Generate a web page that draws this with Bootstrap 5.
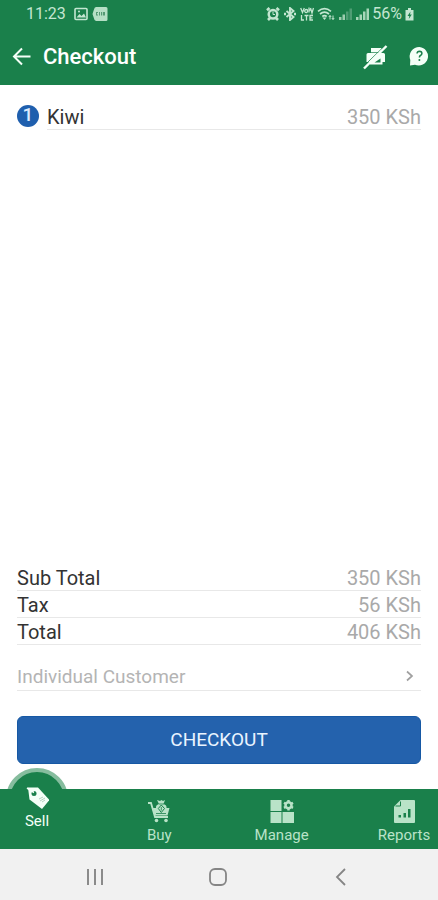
<!DOCTYPE html>
<html lang="en">
<head>
<meta charset="utf-8">
<meta name="viewport" content="width=device-width, initial-scale=1">
<title>Checkout</title>
<link href="https://cdn.jsdelivr.net/npm/bootstrap@5.3.0/dist/css/bootstrap.min.css" rel="stylesheet">
<style>
  :root { --brand: #1a804b; --mint: #b9e3c8; --line: #e8e8e8; --soft: #a9a9a9; }
  body { font-family: Roboto, "Liberation Sans", sans-serif; font-size: 20px; line-height: 26px; color: #333; background: #fff; }
  svg { display: block; flex: none; }
  .brand-bg { background: var(--brand); }
  .status-line { height: 28px; padding: 0 24px 0 26px; font-size: 16px; line-height: 28px; color: #c4e6d1; }
  .status-icons { gap: 3px; }
  .app-bar { height: 57px; padding: 0 8px 0 11px; }
  .app-title { font-size: 22px; line-height: 28px; font-weight: 500; margin-left: 10px; }
  .sheet { padding: 19px 17px 25px 17px; }
  .rule { border-bottom: 1px solid var(--line); }
  .item-number { width: 22px; height: 22px; border-radius: 50%; background: #1f5fae; color: #dcebff; font-size: 19px; line-height: 20px; font-weight: 500; margin-top: 1px; }
  .item-line { height: 26px; }
  .amount { color: var(--soft); }
  .sum-line { height: 27px; line-height: 28px; }
  .sum-line > * { font-weight: 400; }
  .customer { height: 28px; margin-top: 18px; color: #b4b4b4; font-size: 19px; line-height: 28px; }
  .pay { height: 48px; margin-top: 25px; border-radius: 6px; background: #2462ad; border: 1px solid #1658a4; color: #eaf4ff; font-size: 19px; line-height: 28px; }
  .pay:hover { background: #1d569b; color: #fff; }
  .tabs { height: 60px; padding-left: 3px; }
  .tab-link { width: 68px; padding-top: 10px; color: var(--mint); font-size: 15px; line-height: 20px; text-decoration: none; position: relative; }
  .tab-link svg { margin-bottom: 2px; }
  .tab-current { padding-top: 0; margin-top: -4px; color: #f4fff7; }
  .tab-current > * { position: relative; }
  .tab-current::before { content: ""; position: absolute; left: 3px; top: -17px; width: 62px; height: 62px; border-radius: 50%; background: var(--brand); border: 4px solid #86bd9e; clip-path: inset(0 0 41px 0); }
  .system-bar { height: 51px; padding: 4px 85px 0 83px; background: #f1f1f1; }
  .system-bar .btn { line-height: 0; }
</style>
<script src="https://cdn.jsdelivr.net/npm/bootstrap@5.3.0/dist/js/bootstrap.bundle.min.js"></script>
</head>
<body class="d-flex flex-column min-vh-100">
<header class="brand-bg">
  <div class="status-line d-flex align-items-center justify-content-between">
    <div class="d-flex align-items-center">
      <span>11:23</span>
      <svg class="ms-2" width="14" height="14" viewBox="0 0 14 14"><rect x="1" y="1.500" width="12" height="11" rx="1" fill="none" stroke="#c4e6d1" stroke-width="1.600"/><path d="M2.500 10.500 5.500 7l2 2L10 6.500l2 4z" fill="#c4e6d1"/><circle cx="5" cy="4.500" r="1" fill="#c4e6d1"/></svg>
      <svg class="ms-1" width="16" height="14" viewBox="0 0 16 14"><path d="M4 0h10q1.500 0 1.500 1.500v11q0 1.500-1.500 1.500H4Q2 13 1.500 10L.5 7l1.300-4Q2.500 0 4 0" fill="#b5dfc5"/><path d="M4 5h2v1H5v1.500h1v1H4zm3 0h1v3.500H7zm2 0h1.200v3.500H9zm2 0h2v3.500h-2z" fill="#559a74"/></svg>
    </div>
    <div class="status-icons d-flex align-items-center">
      <svg width="14" height="14" viewBox="0 0 14 14" fill="none" stroke="#c4e6d1"><circle cx="7" cy="7.300" r="4.300" stroke-width="2.500"/><path d="M1 3.200 3.500 1M13 3.200 10.500 1M2 13l2-2M12 13l-2-2" stroke-width="2.600"/><path d="M7 4.500v3h2"/></svg>
      <svg width="14" height="14" viewBox="0 0 13 14" fill="none" stroke="#c4e6d1" stroke-width="1.900"><path d="m3 4 7 6-3.500 3V1L10 4l-7 6"/><path d="M.5 7h2M10.500 7h2" stroke-width="2.600"/></svg>
      <svg width="14" height="14" viewBox="0 0 14 14" fill="none" stroke="#c4e6d1" stroke-width="1.300"><path d="m.7 1 1.800 4.500L4.300 1"/><circle cx="6.200" cy="4" r="1.500"/><path d="M9 .5v5M9 3h1.500M13.500 1l-1.500 5-1.500-5M1.500 8v5H4M4.500 8.500h4M6.500 8.500v5M13 8.500H10v4.500h3M10 10.800h2.500"/></svg>
      <svg width="18" height="14" viewBox="0 0 18 14" fill="none" stroke="#c4e6d1"><path d="M1 4.300Q7.500-1 14 4.300M3 7q4.500-3.800 9 0M5.300 9.500q2.200-1.800 4.400 0" stroke-width="1.700"/><path d="m7.500 13-2-2.500h4z" fill="#c4e6d1" stroke="none"/><path d="M13 8.500v4M16 12.500v-4M11.800 10 13 8.500 14.200 10M14.800 11l1.200 1.500 1.200-1.500"/></svg>
      <svg width="14" height="14" viewBox="0 0 14 14"><path d="M1 10h2.500v3H1zM4.500 7.500H7V13H4.500z" fill="#9dcdb0"/><path d="M8 4.500h2.500V13H8zM11.500 1.500H14V13h-2.500z" fill="#4f9d74"/></svg>
      <svg width="14" height="14" viewBox="0 0 14 14"><path d="M1 10h2.500v3H1zM4.500 7.500H7V13H4.500zM8 4.500h2.500V13H8zM11.500 1.500H14V13h-2.500z" fill="#a7d6b9"/></svg>
      <span>56%</span>
      <svg width="9" height="14" viewBox="0 0 9 14"><path d="M3 1h3v2h2.500v10.500h-8V3H3z" fill="#c4e6d1"/><path d="M5.500 4.500 2.500 9h1.800l-.5 3L6.800 7.500H5z" fill="#1a804b"/></svg>
    </div>
  </div>
  <div class="app-bar d-flex align-items-center">
    <button class="btn p-0 border-0" type="button" aria-label="Back">
      <svg width="22" height="22" viewBox="0 0 22 22" fill="none" stroke="#f4fff7" stroke-width="2"><path d="M19.500 10.500H3M11 2.500l-8 8 8 8"/></svg>
    </button>
    <h1 class="app-title text-white mb-0 me-auto">Checkout</h1>
    <button class="btn p-0 border-0 me-3" type="button" aria-label="Printer off">
      <svg width="26" height="26" viewBox="0 0 26 26"><path d="M9 4h10.500v4H9zM6 9h15.500q1.500 0 1.500 1.500V18h-2.500v2.500H8V18H4.500v-7.500Q4.500 9 6 9z" fill="#f4fff7"/><path d="m12.500 18.500 6-4v4z" fill="#1a804b"/><path d="M9 8.500h10" stroke="#5aa57d"/><path d="M22.500 2 .8 23" stroke="#1a804b" stroke-width=".8"/><path d="M24.500 2 2 24.500" stroke="#f4fff7" stroke-width="2.400"/></svg>
    </button>
    <button class="btn p-0 border-0 ms-1" type="button" aria-label="Help">
      <svg width="22" height="22" viewBox="0 0 22 22"><path d="M11.500 1a9.300 9.300 0 1 1-4.500 17.800L2 19.500 2.300 14A9.500 9.500 0 0 1 11.500 1" fill="#f4fff7"/><path d="M9 7.500q.2-2.300 2.500-2.300 2.400.1 2.400 2.200 0 1.300-1.500 2.100-1 .6-1 2" fill="none" stroke="#1a804b" stroke-width="1.500"/><circle cx="11.400" cy="14" r="1" fill="#1a804b"/></svg>
    </button>
  </div>
</header>

<main class="sheet flex-grow-1 d-flex flex-column">
  <div class="d-flex align-items-start">
    <span class="item-number text-center flex-shrink-0">1</span>
    <div class="item-line rule d-flex justify-content-between flex-grow-1 ms-2">
      <span>Kiwi</span><span class="amount">350 KSh</span>
    </div>
  </div>

  <dl class="mt-auto mb-0">
    <div class="sum-line rule d-flex justify-content-between"><dt>Sub Total</dt><dd class="amount mb-0">350 KSh</dd></div>
    <div class="sum-line rule d-flex justify-content-between"><dt>Tax</dt><dd class="amount mb-0">56 KSh</dd></div>
    <div class="sum-line rule d-flex justify-content-between"><dt>Total</dt><dd class="amount mb-0">406 KSh</dd></div>
  </dl>
  <a href="#" class="customer rule d-flex justify-content-between text-decoration-none">
    <span>Individual Customer</span>
    <svg class="mt-1 me-1" width="14" height="18" viewBox="0 0 14 18" fill="none" stroke="#a0a0a0" stroke-width="1.700"><path d="m4 4.500 5 4.500-5 4.500"/></svg>
  </a>
  <button class="pay btn w-100 p-0" type="button">CHECKOUT</button>
</main>

<nav class="tabs brand-bg d-flex justify-content-between" aria-label="Main">
  <a href="#" class="tab-link tab-current d-flex flex-column align-items-center" aria-current="page">
    <svg width="24" height="24" viewBox="0 0 24 24"><path d="M3 2.500 13 2.500 24.500 15 17 24 4.500 14.500z" fill="#f4fff7"/><circle cx="9" cy="8.500" r="2.500" fill="#1a804b"/><path d="m2 3 7 4.500" stroke="#f4fff7" stroke-width="1.500"/><path d="m14 14 4-2m-3 4 5-3m-3 4 3-2" stroke="#a5c3b3" stroke-width=".8"/></svg>
    <span>Sell</span>
  </a>
  <a href="#" class="tab-link d-flex flex-column align-items-center">
    <svg width="24" height="24" viewBox="0 0 24 24"><path d="M1 4h3l4 14h13" fill="none" stroke="#b9e3c8" stroke-width="1.800"/><path d="M5 9h4q-.5-3 3-4L10 1l3 1 1.500-1L16 2l2-1-1.500 4q3.500 1 3 4h3l-2 7.500H7.500z" fill="#b9e3c8"/><path d="m14.300 6 3.200 3.500-3.200 4-3-4z" fill="none" stroke="#1a804b"/><path d="M14.300 8v3.500M9 14.500h10M12 5h5" stroke="#1a804b" stroke-width=".8"/><circle cx="9.500" cy="21.500" r="1.800" fill="#b9e3c8"/><circle cx="19" cy="21.500" r="1.800" fill="#b9e3c8"/></svg>
    <span>Buy</span>
  </a>
  <a href="#" class="tab-link d-flex flex-column align-items-center">
    <svg width="24" height="24" viewBox="0 0 24 24"><path d="M.5 1h11v11H.5zM.5 13h11v11H.5zM12.500 13H24v11H12.500z" fill="#b9e3c8"/><circle cx="18.500" cy="6.300" r="3" fill="none" stroke="#b9e3c8" stroke-width="2.500"/><g stroke="#b9e3c8" stroke-width="2.400" stroke-dasharray="1.700 7"><path d="M18.500 1.100v10.400M14 3.700l9 5.200M14 8.900l9-5.200"/></g></svg>
    <span>Manage</span>
  </a>
  <a href="#" class="tab-link d-flex flex-column align-items-center">
    <svg width="24" height="24" viewBox="0 0 24 24"><path d="M8.500 1H22q1 0 1 1v21q0 1-1 1H3q-1 0-1-1V7.500z" fill="#b9e3c8"/><path d="M3.500 7h5V2.500" fill="none" stroke="#1a804b"/><path d="M6.500 16h2.500v2.500H6.500zM11.500 14H14v4.500h-2.500zM16 10h2.500v8.500H16z" fill="#1a804b"/></svg>
    <span>Reports</span>
  </a>
</nav>

<footer class="system-bar d-flex align-items-center justify-content-between">
  <button class="btn p-0 border-0" type="button" aria-label="Recent apps"><svg width="24" height="24" viewBox="0 0 24 24" stroke="#8b8b8b" stroke-width="2"><path d="M5 4v16M12 4v16M19 4v16"/></svg></button>
  <button class="btn p-0 border-0" type="button" aria-label="Home"><svg width="24" height="24" viewBox="0 0 24 24" fill="none" stroke="#858585" stroke-width="1.800"><rect x="4" y="4" width="16" height="16" rx="5"/></svg></button>
  <button class="btn p-0 border-0" type="button" aria-label="Back"><svg width="24" height="24" viewBox="0 0 24 24" fill="none" stroke="#858585" stroke-width="1.800"><path d="m16 4-8 8 8 8"/></svg></button>
</footer>
</body>
</html>
